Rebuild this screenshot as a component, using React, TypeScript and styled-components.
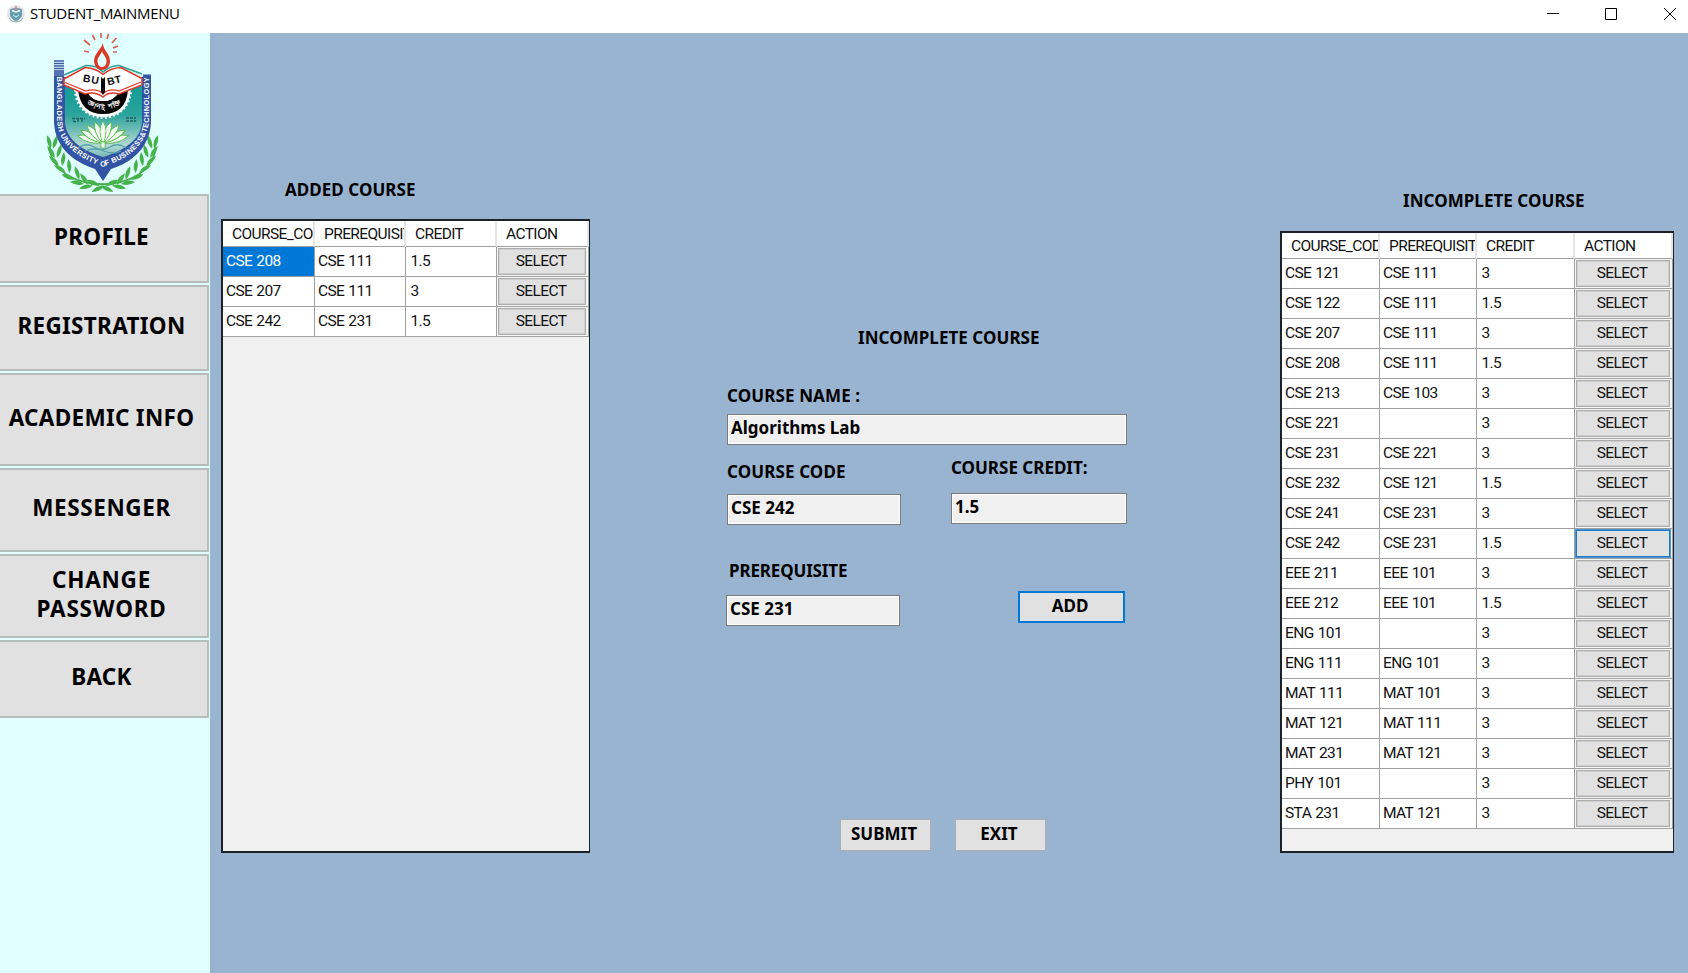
import React from 'react';
import styled, { createGlobalStyle } from 'styled-components';

const Global = createGlobalStyle`
  * { box-sizing: border-box; }
  body { margin: 0; background: #99b4d1; overflow: hidden; }
  button, input { font: inherit; color: inherit; letter-spacing: inherit; }
`;

const Window = styled.div`
  width: 1688px;
  height: 973px;
  display: flex;
  flex-direction: column;
  color: #000;
  font-family: 'Noto Sans', 'Open Sans', sans-serif;
`;

const TitleBar = styled.header`
  height: 33px;
  flex: none;
  display: flex;
  align-items: center;
  padding: 0 6px 5px 7px;
  background: #fff;
`;

const AppIcon = styled.svg`
  width: 18px;
  height: 20px;
  margin-right: 5px;
`;

const WindowTitle = styled.span`
  font: 15px/20px 'Open Sans', sans-serif;
  letter-spacing: -0.35px;
  flex: 1;
  padding-bottom: 2px;
`;

const WindowControls = styled.svg`
  width: 144px;
  height: 28px;
  flex: none;
`;

const Body = styled.div`
  flex: 1;
  display: flex;
  background: #99b4d1;
`;

const Sidebar = styled.nav`
  width: 210px;
  flex: none;
  background: #e0ffff;
`;

const Crest = styled.svg`
  display: block;
  width: 120px;
  height: 161px;
  margin-left: 43px;
`;

const NavButton = styled.button<{ $height: number; $gap?: number; $tracking?: number }>`
  display: block;
  width: 209px;
  height: ${(p) => p.$height}px;
  margin: 0 0 ${(p) => p.$gap ?? 2}px;
  padding: 0 4px 3px 0;
  border: 2px solid #b7bcbc;
  border-left: 0;
  background: #e1e1e1;
  font-weight: 700;
  font-size: 22.5px;
  line-height: 28.5px;
  letter-spacing: ${(p) => p.$tracking ?? 0.3}px;
`;

const Main = styled.main`
  flex: 1;
  display: flex;
  align-items: flex-start;
`;

const Panel = styled.section<{ $width: number; $top: number; $left: number }>`
  width: ${(p) => p.$width}px;
  margin: ${(p) => p.$top}px 0 0 ${(p) => p.$left}px;
  flex: none;
`;

const Heading = styled.h2<{ $indent: number; $after: number }>`
  margin: 0 0 ${(p) => p.$after}px;
  padding-left: ${(p) => p.$indent}px;
  font-size: 17px;
  line-height: 24px;
  font-weight: 700;
  letter-spacing: 0.05px;
  white-space: nowrap;
`;

const Grid = styled.div<{ $height: number }>`
  height: ${(p) => p.$height}px;
  border: 1px solid #1c2228;
  border-width: 2px 1px 2px 2px;
  background: #f0f0f0;
  font-family: Roboto, sans-serif;
  font-size: 15.5px;
  letter-spacing: -0.6px;
  color: #111;
`;

const Row = styled.div<{ $cols: string; $height?: number }>`
  display: grid;
  grid-template-columns: ${(p) => p.$cols};
  grid-template-rows: 100%;
  height: ${(p) => p.$height ?? 30}px;
`;

const HeadCell = styled.div`
  padding: 1px 0 0 9px;
  border-right: 2px solid #e5e5e5;
  border-bottom: 1px solid #a0a0a0;
  background: #fff;
  line-height: 24px;
  overflow: hidden;
  white-space: nowrap;
`;

const Cell = styled.div<{ $selected?: boolean }>`
  padding: 0 0 0 3px;
  border-right: 1px solid #a0a0a0;
  border-bottom: 1px solid #a0a0a0;
  background: ${(p) => (p.$selected ? '#0078d7' : '#fff')};
  color: ${(p) => (p.$selected ? '#fff' : 'inherit')};
  line-height: 29px;
  word-spacing: 0.8px;
  white-space: nowrap;

  &:nth-child(3) {
    padding-left: 4.5px;
  }
`;

const ActionCell = styled(Cell)`
  display: flex;
  padding: 1px 2px 1px 1px;
  background: #f6f6f6;
`;

const SelectButton = styled.button<{ $focused?: boolean }>`
  flex: 1;
  padding: 0 2px 1px 0;
  border: ${(p) => (p.$focused ? '1px solid #1979ca' : '1px solid #adadad')};
  outline: 1px solid ${(p) => (p.$focused ? '#4d94d0' : '#cfcfcf')};
  outline-offset: ${(p) => (p.$focused ? 0 : -2)}px;
  background: #e1e1e1;
  line-height: 22px;
`;

const Form = styled.div`
  display: grid;
  grid-template-columns: 224px 176px;
  align-items: start;
`;

const Field = styled.label<{ $top?: number; $wide?: boolean; $width?: number; $left?: number }>`
  display: flex;
  flex-direction: column;
  grid-column: ${(p) => (p.$wide ? '1 / -1' : 'auto')};
  width: ${(p) => (p.$width ? `${p.$width}px` : 'auto')};
  margin: ${(p) => p.$top ?? 0}px 0 0 ${(p) => p.$left ?? 0}px;
`;

const FieldLabel = styled.span<{ $indent?: number; $after?: number; $tracking?: number }>`
  padding-left: ${(p) => p.$indent ?? 0}px;
  margin-bottom: ${(p) => p.$after ?? 6}px;
  font-size: 17px;
  line-height: 24px;
  font-weight: 700;
  letter-spacing: ${(p) => p.$tracking ?? 0.12}px;
  white-space: nowrap;
`;

const TextBox = styled.input`
  width: 100%;
  height: 31px;
  padding: 0 0 4px 3px;
  border: 1px solid #7a7a7a;
  border-radius: 0;
  box-shadow: inset 0 0 0 1px #fff;
  outline: 0;
  background: #f0f0f0;
  font-size: 17px;
  font-weight: 700;
`;

const PushButton = styled.button<{ $width: number; $primary?: boolean; $top?: number; $left?: number }>`
  width: ${(p) => p.$width}px;
  height: 32px;
  margin: ${(p) => p.$top ?? 0}px 0 0 ${(p) => p.$left ?? 0}px;
  padding: 0 3px 3px 0;
  border: ${(p) => (p.$primary ? '2px solid #0078d7' : '1px solid #adadad')};
  background: #e1e1e1;
  font-size: 17px;
  line-height: 22px;
  font-weight: 700;
`;

const Actions = styled.div`
  display: flex;
  gap: 24px;
  margin: 193px 0 0 113px;
`;

const added = [
  ['CSE 208', 'CSE 111', '1.5'],
  ['CSE 207', 'CSE 111', '3'],
  ['CSE 242', 'CSE 231', '1.5'],
];

const incomplete = [
  ['CSE 121', 'CSE 111', '3'],
  ['CSE 122', 'CSE 111', '1.5'],
  ['CSE 207', 'CSE 111', '3'],
  ['CSE 208', 'CSE 111', '1.5'],
  ['CSE 213', 'CSE 103', '3'],
  ['CSE 221', '', '3'],
  ['CSE 231', 'CSE 221', '3'],
  ['CSE 232', 'CSE 121', '1.5'],
  ['CSE 241', 'CSE 231', '3'],
  ['CSE 242', 'CSE 231', '1.5'],
  ['EEE 211', 'EEE 101', '3'],
  ['EEE 212', 'EEE 101', '1.5'],
  ['ENG 101', '', '3'],
  ['ENG 111', 'ENG 101', '3'],
  ['MAT 111', 'MAT 101', '3'],
  ['MAT 121', 'MAT 111', '3'],
  ['MAT 231', 'MAT 121', '3'],
  ['PHY 101', '', '3'],
  ['STA 231', 'MAT 121', '3'],
];

const headers = ['COURSE_CODE', 'PREREQUISITE', 'CREDIT', 'ACTION'];

type CourseGridProps = {
  rows: string[][];
  cols: string;
  height: number;
  headHeight: number;
  selectedRow?: number;
  focusedRow?: number;
};

function CourseGrid({ rows, cols, height, headHeight, selectedRow, focusedRow }: CourseGridProps) {
  return (
    <Grid $height={height}>
      <Row $cols={cols} $height={headHeight}>
        {headers.map((h) => <HeadCell key={h}>{h}</HeadCell>)}
      </Row>
      {rows.map((row, i) => (
        <Row $cols={cols} key={row[0]}>
          {row.map((text, c) => (
            <Cell key={c} $selected={i === selectedRow && c === 0}>{text}</Cell>
          ))}
          <ActionCell>
            <SelectButton $focused={i === focusedRow}>SELECT</SelectButton>
          </ActionCell>
        </Row>
      ))}
    </Grid>
  );
}

const toothAngles = Array.from({ length: 23 }, (_, i) => -4 + i * 8.6);
const leftLeaves = [
  [49, 142, 75], [55, 142, 108], [51, 152, 58], [59, 151, 108], [54, 161, 45], [63, 159, 98],
  [60, 169, 32], [69, 166, 85], [68, 177, 22], [77, 173, 72], [77, 183, 8], [84, 179, 55], [86, 187, -12], [93, 183, 25],
  [98, 189, -25],
];
const petals = [[-74, 1.2], [74, 1.2], [-60, 1.18], [60, 1.18], [-42, 1.1], [42, 1.1], [-21, 1.02], [21, 1.02], [0, 1]];

function CrestArt() {
  return (
    <>
      <defs>
        <linearGradient id="field" x1="0" y1="0" x2="0" y2="1">
          <stop offset="0" stopColor="#0d9a94" />
          <stop offset="0.45" stopColor="#2aa39c" />
          <stop offset="0.85" stopColor="#b5d9d2" />
          <stop offset="1" stopColor="#79b9b8" />
        </linearGradient>
        <path id="rim" d="M57.3 76.5 V122 C58 145 82 160 103 166.5 C126 160 146 146 148.7 122 V74" />
        <path id="motto" d="M86 103.5 Q104 116 123 103" />
        <g id="branch">
          <path d="M49 147 C52 170 74 187 114 184" fill="none" stroke="#45ad4c" strokeWidth="1.6" />
          {leftLeaves.map(([x, y, a], i) => (
            <path key={i} d="M-7 0 Q0 -4.6 7 0 Q0 3.6 -7 0Z" fill="#45b34b" transform={`translate(${x} ${y}) rotate(${a})`} />
          ))}
        </g>
      </defs>
      <use href="#branch" />
      <use href="#branch" transform="translate(205 0) scale(-1 1)" />
      <path d="M54 74.5 H64 V77 H143 V74.5 H151 V122 C150 148 131 163 111 169 L103 181 L95 169 C74 162 55 148 54 122Z" fill="#3154a5" />
      <path d="M54 61h10M54 63.5h10M54 66h10M54 68.5h10" stroke="#3c5a9c" strokeWidth="1.3" />
      <path d="M54 70h10v6H54Z" fill="#5673b3" />
      <path d="M65 80 H142 V122 C141 140 123 151 103 157 C83 151 66 140 65 122Z" fill="url(#field)" />
      <path d="M78 148 Q86 142 94 147 T110 147 T126 148 M85 151 Q95 147 104 151 T121 151" fill="none" stroke="#53a6ad" strokeWidth="1.3" />
      <g stroke="#fff" strokeWidth="1.9">
        {toothAngles.map((a) => (
          <path key={a} d="M127 91h5" transform={`rotate(${a} 103 90)`} />
        ))}
      </g>
      <path d="M75 88 Q78 117 103 117 Q129 117 131 88Z" fill="#fff" />
      <path d="M78 90 Q81 114 103 114 Q126 114 128 90 L119 92 Q114 101 103 101 Q92 101 87 92Z" fill="#080808" />
      <path d="M87 91 Q92 101 103 101 Q114 101 119 91Z" fill="#fff" />
      <path d="M64 75 L86 65.5 Q97 65 103 72 Q111 65 119 65.5 L142 74" fill="none" stroke="#2ba59a" strokeWidth="1.5" />
      <path d="M64 79 L85 67.5 Q97 68.5 103 74.5 Q110 68 121 67.5 L142 78.5 V85 L119 94 Q109 91 103 97 Q95 91 85 94 L64 85Z" fill="#fff" stroke="#dd3a2d" strokeWidth="1.5" />
      <path d="M65 82.5 L86 91 Q96 88 103 93.5 Q110 88 119 91 L141 82" fill="none" stroke="#dd3a2d" strokeWidth="1.2" />
      <path d="M101 77 L103 79 L105 77 V92 L103 95 L101 92Z" fill="#080808" />
      <g fontFamily="Liberation Sans, sans-serif" fontWeight="700" fontSize="10.5" fill="#111">
        <text transform="translate(82.5 81.5) rotate(10)" textLength="16">BU</text>
        <text transform="translate(108 85.5) rotate(-13)" textLength="14">BT</text>
      </g>
      <text fontFamily="Noto Sans, sans-serif" fontWeight="700" fontSize="7" fill="#fff">
        <textPath href="#motto" startOffset="1" textLength="37">জ্ঞানই শক্তি</textPath>
      </text>
      <path d="M72 118.5h13M73 121l3 1M78 119v3M82 119v3M126 118h10M126 121h10" strokeDasharray="3 1" stroke="#285f62" strokeWidth="1.4" fill="none" />
      <g fill="#f4fff4" stroke="#56b94c" strokeWidth="0.8">
        {petals.map(([a, s]) => (
          <path key={a} d="M103 144 Q97 130 103 121 Q109 130 103 144Z" transform={`rotate(${a} 103 143) translate(103 143) scale(1 ${s}) translate(-103 -143)`} />
        ))}
        <path d="M101 142h4v6h-4z" />
      </g>
      <path fillRule="evenodd" d="M103 43 C103 51 110 53 110 61 C110 67 106 70 102 70 C97 70 94 66 94 60 C95 53 101 49 103 43Z M102 51 C101 55 97.5 57 97.5 61 C97.5 65 100 67 102 67 C105 67 106.5 64 106.5 61 C106.5 57 103 55 102 51Z" fill="#dc3929" />
      <path d="M101 38V33M107 39l1.5-5M95 40l-2.5-5M112 43l4.5-5M90 45l-6-5M113 48l5-2M89 52l-5-1M113 52h4" stroke="#d9604f" strokeWidth="1.7" />
      <text fontFamily="Liberation Sans, sans-serif" fontWeight="700" fontSize="7.4" fill="#fff">
        <textPath href="#rim" textLength="226" lengthAdjust="spacing">BANGLADESH UNIVERSITY OF BUSINESS&amp;TECHNOLOGY</textPath>
      </text>
    </>
  );
}

export default function App() {
  return (
    <Window>
      <Global />
      <TitleBar>
        <AppIcon viewBox="0 0 18 20">
          <circle cx="9" cy="10" r="9" fill="#e3e6e9" />
          <path d="M3.5 5.5 9 4l5.5 1.5V12Q13 15 9 17 5 15 3.5 12Z" fill="#5fa3b2" stroke="#7f93bb" />
          <path d="M5 6.5 9 8l4-1.5" stroke="#fff" strokeWidth="1.5" fill="none" />
          <path d="M9 2v4" stroke="#dc8d84" strokeWidth="1.5" />
          <path d="M6 11l3 2 3-2" stroke="#d7f2e6" fill="none" />
          <path d="M2 14q2 4 7 4t7-4" stroke="#95bda9" fill="none" />
        </AppIcon>
        <WindowTitle>STUDENT_MAINMENU</WindowTitle>
        <WindowControls viewBox="1538 0 144 28" fill="none" stroke="#000" strokeWidth="1">
          <path d="M1547 13.5h12M1605.5 8.5h11v11h-11zM1664 8l12 12M1676 8l-12 12" />
        </WindowControls>
      </TitleBar>
      <Body>
        <Sidebar>
          <Crest viewBox="43 33 120 161"><CrestArt /></Crest>
          <NavButton $height={89}>PROFILE</NavButton>
          <NavButton $height={86}>REGISTRATION</NavButton>
          <NavButton $height={93}>ACADEMIC INFO</NavButton>
          <NavButton $height={84} $tracking={0.6}>MESSENGER</NavButton>
          <NavButton $height={84} $tracking={0.8}>CHANGE<br />PASSWORD</NavButton>
          <NavButton $height={78}>BACK</NavButton>
        </Sidebar>
        <Main>
          <Panel $width={369} $top={145} $left={11}>
            <Heading $indent={64} $after={17}>ADDED COURSE</Heading>
            <CourseGrid rows={added} cols="92px 91px 91px 92px" height={634} headHeight={26} selectedRow={0} />
          </Panel>
          <Panel $width={400} $top={293} $left={137}>
            <Heading $indent={131} $after={34}>INCOMPLETE COURSE</Heading>
            <Form>
              <Field $wide>
                <FieldLabel>COURSE NAME :</FieldLabel>
                <TextBox readOnly defaultValue="Algorithms Lab" />
              </Field>
              <Field $top={15} $width={174}>
                <FieldLabel $after={10}>COURSE CODE</FieldLabel>
                <TextBox readOnly defaultValue="CSE 242" />
              </Field>
              <Field $top={11}>
                <FieldLabel $after={13} $tracking={0}>COURSE CREDIT:</FieldLabel>
                <TextBox readOnly defaultValue="1.5" />
              </Field>
              <Field $top={34} $width={174} $left={-1}>
                <FieldLabel $indent={3} $after={12} $tracking={-0.15}>PREREQUISITE</FieldLabel>
                <TextBox readOnly defaultValue="CSE 231" />
              </Field>
              <PushButton $width={107} $primary $top={66} $left={67}>ADD</PushButton>
            </Form>
            <Actions>
              <PushButton $width={91}>SUBMIT</PushButton>
              <PushButton $width={91}>EXIT</PushButton>
            </Actions>
          </Panel>
          <Panel $width={394} $top={156} $left={153}>
            <Heading $indent={123} $after={18}>INCOMPLETE COURSE</Heading>
            <CourseGrid rows={incomplete} cols="98px 97px 98px 98px" height={622} headHeight={26} focusedRow={9} />
          </Panel>
        </Main>
      </Body>
    </Window>
  );
}
